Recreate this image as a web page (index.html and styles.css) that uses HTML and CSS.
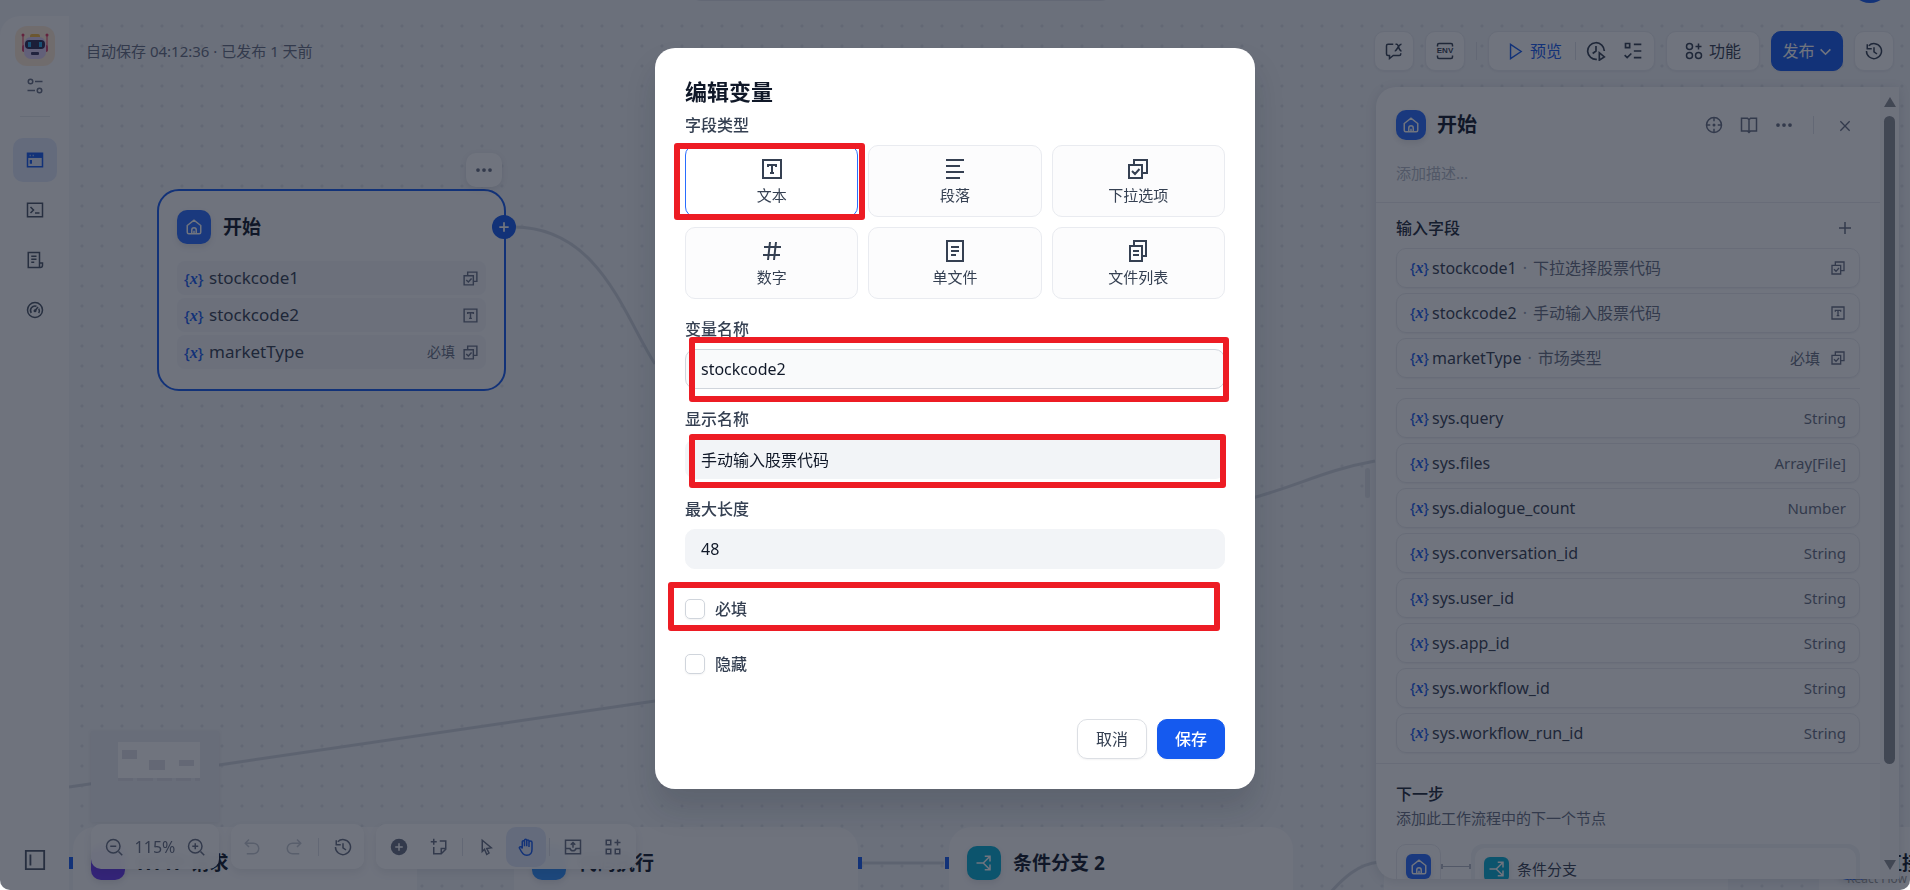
FILE: index.html
```html
<!DOCTYPE html>
<html lang="zh">
<head>
    <meta charset="UTF-8">
    <title>编辑变量</title>
    <link rel="stylesheet" href="styles.css">
</head>
<body>
<!-- 图标 -->
<svg class="sprite">
    <symbol id="i-select" viewBox="0 0 24 24"><path d="M8 7V3h13v13h-4M3 8h13v13H3zM6 14l3 3 4.500-5"/></symbol>
    <symbol id="i-text" viewBox="0 0 24 24"><path d="M3 3h18v18H3zM8 10V8h8v2M12 8v8M10 16h4"/></symbol>
    <symbol id="i-para" viewBox="0 0 24 24"><path d="M3 3h18M3 9h14M3 15h18M3 21h14"/></symbol>
    <symbol id="i-hash" viewBox="0 0 24 24"><path d="M10 3L8 21M16 3l-2 18M4 8h17M3 16h17"/></symbol>
    <symbol id="i-file" viewBox="0 0 24 24"><path d="M4 2h16v20H4zM8 8h8M8 12h8M8 16h5"/></symbol>
    <symbol id="i-files" viewBox="0 0 24 24"><path d="M8 6V2h12v15h-4M4 7h12v15H4zM7 12h6M7 16h6"/></symbol>
    <symbol id="i-home" viewBox="0 0 24 24"><path d="M3 10l9-7 9 7v9a2 2 0 0 1-2 2H5a2 2 0 0 1-2-2zM9 21v-5a3 3 0 0 1 6 0v5M12 17v4"/></symbol>
    <symbol id="i-branch" viewBox="0 0 24 24"><path d="M2 12h9l8-8M11 12l8 8M13 3h7v7M13 21h7v-7"/></symbol>
    <symbol id="i-plus" viewBox="0 0 24 24"><path d="M12 4v16M4 12h16"/></symbol>
    <symbol id="i-close" viewBox="0 0 24 24"><path d="M5 5l14 14M19 5L5 19"/></symbol>
    <symbol id="i-more" viewBox="0 0 24 24"><g class="solid"><circle cx="4" cy="12" r="2.500"/><circle cx="12" cy="12" r="2.500"/><circle cx="20" cy="12" r="2.500"/></g></symbol>
    <symbol id="i-sliders" viewBox="0 0 24 24"><path d="M12 6h10M2 18h10"/><circle cx="6" cy="6" r="3"/><circle cx="18" cy="18" r="3"/></symbol>
    <symbol id="i-window" viewBox="0 0 24 24"><path d="M2 3h20v18H2zM2 8h20"/><path class="solid" d="M2 3h20v6H2zM5 12h3v5H5z"/><path class="knock" d="M5 6h1M9 6h1"/></symbol>
    <symbol id="i-terminal" viewBox="0 0 24 24"><path d="M2 3h20v18H2zM6 8l4 4-4 4M12 16h6"/></symbol>
    <symbol id="i-logs" viewBox="0 0 24 24"><path d="M18 15V2H3v20h16a3 3 0 0 0 3-3v-3h-4v6M7 7h7M7 11h7M7 15h4"/></symbol>
    <symbol id="i-gauge" viewBox="0 0 24 24"><circle cx="12" cy="12" r="10"/><path d="M7 16a6 6 0 0 1 7-9M17 10a6 6 0 0 1 0 6M12 13l4-5"/><circle class="solid" cx="12" cy="13" r="2"/></symbol>
    <symbol id="i-layout" viewBox="0 0 24 24"><path d="M2 2h20v20H2zM7 6v12"/></symbol>
    <symbol id="i-chatvar" viewBox="0 0 24 24"><path d="M11 3H4a2 2 0 0 0-2 2v11a2 2 0 0 0 2 2h2v4l5-4h8a2 2 0 0 0 2-2v-1M13 12c3 0 5-9 9-9M14 3h2c2 0 2 9 6 9"/></symbol>
    <symbol id="i-env" viewBox="0 0 24 24"><path d="M2 6V4a2 2 0 0 1 2-2h16a2 2 0 0 1 2 2v2M2 18v2a2 2 0 0 0 2 2h16a2 2 0 0 0 2-2v-2"/></symbol>
    <symbol id="i-play" viewBox="0 0 24 24"><path d="M5 2l15 10L5 22z"/></symbol>
    <symbol id="i-runs" viewBox="0 0 24 24"><path d="M13 22A10 10 0 1 1 22 12M12 6v6l-4 3M16 14v9l6-4z"/></symbol>
    <symbol id="i-check" viewBox="0 0 24 24"><path d="M3 3h5v5H3zM13 4h9M13 12h9M13 20h9M2 17l3 3 5-5"/></symbol>
    <symbol id="i-apps" viewBox="0 0 24 24"><circle cx="6" cy="6" r="4"/><circle cx="6" cy="18" r="4"/><circle cx="18" cy="18" r="4"/><path d="M18 2v8M14 6h8"/></symbol>
    <symbol id="i-blocks" viewBox="0 0 24 24"><path d="M3 3h6v6H3zM3 15h6v6H3zM15 15h6v6h-6zM18 2v8M14 6h8"/></symbol>
    <symbol id="i-down" viewBox="0 0 24 24"><path d="M3 8l9 9 9-9"/></symbol>
    <symbol id="i-history" viewBox="0 0 24 24"><path d="M5 5a10 10 0 1 1-3 7M3 3v6h6M12 7v6l4 3"/></symbol>
    <symbol id="i-target" viewBox="0 0 24 24"><circle cx="12" cy="12" r="10"/><path d="M12 2v5M12 17v5M2 12h5M17 12h5"/><circle class="solid" cx="12" cy="12" r="2"/></symbol>
    <symbol id="i-book" viewBox="0 0 24 24"><path d="M2 3h8l2 2 2-2h8v17h-8l-2 2-2-2H2zM12 5v17"/></symbol>
    <symbol id="i-zoomout" viewBox="0 0 24 24"><circle cx="11" cy="11" r="9"/><path d="M18 18l5 5M7 11h8"/></symbol>
    <symbol id="i-zoomin" viewBox="0 0 24 24"><circle cx="11" cy="11" r="9"/><path d="M18 18l5 5M7 11h8M11 7v8"/></symbol>
    <symbol id="i-undo" viewBox="0 0 24 24"><path d="M8 2L3 7l5 5M3 7h11a7 7 0 0 1 0 14H5"/></symbol>
    <symbol id="i-redo" viewBox="0 0 24 24"><path d="M16 2l5 5-5 5M21 7H10a7 7 0 0 0 0 14h9"/></symbol>
    <symbol id="i-add" viewBox="0 0 24 24"><circle class="solid" cx="12" cy="12" r="11"/><path class="knock" d="M12 7v10M7 12h10"/></symbol>
    <symbol id="i-note" viewBox="0 0 24 24"><path d="M13 4h8v11l-6 6H5v-9M21 14h-6v7M5 1v8M1 5h8"/></symbol>
    <symbol id="i-cursor" viewBox="0 0 24 24"><path d="M7 3l12 10-6 1 3 6-3 2-3-7-3 3z"/></symbol>
    <symbol id="i-hand" viewBox="0 0 24 24"><path d="M7 13V5a1 1 0 0 1 3 0v6V3a1 1 0 0 1 3 0v8V4a1 1 0 0 1 3 0v8V6a1 1 0 0 1 4 0v9c0 5-3 8-7 8s-6-2-10-10c1-2 3-2 4 1z"/></symbol>
    <symbol id="i-export" viewBox="0 0 24 24"><path d="M2 3h20v18H2zM2 14h6c1 4 7 4 8 0h6M12 13V7M9 9l3-3 3 3"/></symbol>
</svg>

<div class="app">
    <header class="header"><span class="notch"></span><span class="avatar"></span></header>
    <div class="main">
        <nav class="sidebar">
            <a class="logo" href="#" aria-label="应用">
                <svg width="28" height="28" viewBox="0 0 28 28">
                    <path d="M2 3v16M26 3v16" stroke="#e0355f" stroke-width="1"/>
                    <circle cx="2" cy="3" r="1.500" fill="#e0355f"/><circle cx="26" cy="3" r="1.500" fill="#e0355f"/>
                    <rect x="1" y="13" width="26" height="7" rx="2" fill="#d0406c"/>
                    <rect x="9" y="2" width="10" height="5" rx="2" fill="#f5b73d"/>
                    <rect x="3" y="5" width="22" height="22" rx="7" fill="#dccdf2"/>
                    <rect x="4" y="8" width="20" height="9" rx="4" fill="#2b2850"/>
                    <rect x="7" y="10" width="3" height="5" fill="#27a6e6"/><rect x="18" y="10" width="3" height="5" fill="#27a6e6"/>
                    <rect x="10" y="20" width="8" height="3" rx="1" fill="#3b3560"/>
                </svg>
            </a>
            <svg class="icon sub"><use href="#i-sliders"/></svg>
            <hr>
            <a class="nav on" href="#" aria-label="编排"><svg class="icon"><use href="#i-window"/></svg></a>
            <a class="nav" href="#" aria-label="访问 API"><svg class="icon"><use href="#i-terminal"/></svg></a>
            <a class="nav" href="#" aria-label="日志"><svg class="icon"><use href="#i-logs"/></svg></a>
            <a class="nav" href="#" aria-label="监测"><svg class="icon"><use href="#i-gauge"/></svg></a>
            <button class="nav fold" aria-label="展开"><svg class="icon"><use href="#i-layout"/></svg></button>
        </nav>

        <main class="canvas">
            <!-- 连线 -->
            <svg class="edges" width="1841" height="874">
                <path d="M445 211C530 211 555 300 586 348"/>
                <path d="M0 771L586 685"/>
                <path d="M1160 488C1220 475 1250 455 1306 445"/>
                <path d="M793 847h82"/>
                <path d="M1255 884C1275 860 1290 848 1310 846"/>
            </svg>

            <section class="node start">
                <button class="more" aria-label="更多"><svg class="icon"><use href="#i-more"/></svg></button>
                <h3><span class="badge"><svg class="icon"><use href="#i-home"/></svg></span>开始</h3>
                <ul>
                    <li><span class="var">{<i>x</i>}</span>stockcode1<svg class="icon end"><use href="#i-select"/></svg></li>
                    <li><span class="var">{<i>x</i>}</span>stockcode2<svg class="icon end"><use href="#i-text"/></svg></li>
                    <li><span class="var">{<i>x</i>}</span>marketType<small class="end">必填</small><svg class="icon"><use href="#i-select"/></svg></li>
                </ul>
                <button class="add" aria-label="添加节点"><svg class="icon"><use href="#i-plus"/></svg></button>
            </section>
            <section class="node http">
                <h3><span class="badge purple"></span>HTTP 请求</h3>
            </section>
            <section class="node code">
                <h3><span class="badge sky"></span>代码执行</h3>
            </section>
            <section class="node cond">
                <h3><span class="badge cyan"><svg class="icon"><use href="#i-branch"/></svg></span>条件分支 2</h3>
            </section>
            <section class="node extra"></section>
            <section class="node reply"><h3><span class="badge"></span>直接回复</h3></section>
            <a class="credit" href="#">React Flow</a>

            <div class="topbar">
                <span class="saved">自动保存 04:12:36 · 已发布 1 天前</span>
                <button class="btn square" aria-label="会话变量"><svg class="icon"><use href="#i-chatvar"/></svg></button>
                <button class="btn square env" aria-label="环境变量"><svg class="icon"><use href="#i-env"/></svg><b>ENV</b></button>
                <span class="line"></span>
                <div class="btn group">
                    <button class="preview"><svg class="icon"><use href="#i-play"/></svg>预览</button>
                    <span class="line"></span>
                    <button aria-label="运行历史"><svg class="icon"><use href="#i-runs"/></svg></button>
                    <button aria-label="检查清单"><svg class="icon"><use href="#i-check"/></svg></button>
                </div>
                <button class="btn feature"><svg class="icon"><use href="#i-apps"/></svg>功能</button>
                <button class="btn publish">发布<svg class="icon"><use href="#i-down"/></svg></button>
                <button class="btn square" aria-label="版本历史"><svg class="icon"><use href="#i-history"/></svg></button>
            </div>

            <svg class="minimap" width="128" height="91">
                <path fill="#fff" d="M27 11h82v36H27z"/>
                <path fill="#e0e2e8" d="M31 19h15v9H31zM58 29h16v10H58zM88 29h15v6H88zM27 47h15v3H27zM46 47h16v3H46zM66 47h15v3H66zM85 47h15v3H85zM104 47h5v3h-5z"/>
            </svg>
            <div class="tools">
                <div class="tool zoom">
                    <button aria-label="缩小"><svg class="icon"><use href="#i-zoomout"/></svg></button>
                    <span>115%</span>
                    <button aria-label="放大"><svg class="icon"><use href="#i-zoomin"/></svg></button>
                </div>
                <div class="tool undo">
                    <button class="off" aria-label="撤销"><svg class="icon"><use href="#i-undo"/></svg></button>
                    <button class="off" aria-label="重做"><svg class="icon"><use href="#i-redo"/></svg></button>
                    <span class="line"></span>
                    <button aria-label="历史"><svg class="icon"><use href="#i-history"/></svg></button>
                </div>
                <div class="tool">
                    <button aria-label="添加节点"><svg class="icon"><use href="#i-add"/></svg></button>
                    <button aria-label="添加注释"><svg class="icon"><use href="#i-note"/></svg></button>
                    <span class="line"></span>
                    <button aria-label="指针"><svg class="icon"><use href="#i-cursor"/></svg></button>
                    <button class="on" aria-label="手"><svg class="icon"><use href="#i-hand"/></svg></button>
                    <span class="line"></span>
                    <button aria-label="导出图片"><svg class="icon"><use href="#i-export"/></svg></button>
                    <button aria-label="整理节点"><svg class="icon"><use href="#i-blocks"/></svg></button>
                </div>
            </div>

            <span class="resize"></span>
            <aside class="panel">
                <div class="body">
                    <div class="head">
                        <span class="badge"><svg class="icon"><use href="#i-home"/></svg></span>
                        <h2>开始</h2>
                        <button aria-label="运行此步骤"><svg class="icon"><use href="#i-target"/></svg></button>
                        <button aria-label="帮助文档"><svg class="icon"><use href="#i-book"/></svg></button>
                        <button aria-label="更多"><svg class="icon"><use href="#i-more"/></svg></button>
                        <span class="line"></span>
                        <button class="close" aria-label="关闭"><svg class="icon"><use href="#i-close"/></svg></button>
                    </div>
                    <p class="desc">添加描述...</p>
                    <div class="fields">
                        <div class="caption"><h4>输入字段</h4><button aria-label="添加字段"><svg class="icon"><use href="#i-plus"/></svg></button></div>
                        <ul>
                            <li><span class="var">{<i>x</i>}</span>stockcode1<em><b>·</b>下拉选择股票代码</em><svg class="icon end"><use href="#i-select"/></svg></li>
                            <li><span class="var">{<i>x</i>}</span>stockcode2<em><b>·</b>手动输入股票代码</em><svg class="icon end"><use href="#i-text"/></svg></li>
                            <li><span class="var">{<i>x</i>}</span>marketType<em><b>·</b>市场类型</em><small class="end">必填</small><svg class="icon"><use href="#i-select"/></svg></li>
                        </ul>
                        <ul class="system">
                            <li><span class="var">{<i>x</i>}</span>sys.query<small class="end">String</small></li>
                            <li><span class="var">{<i>x</i>}</span>sys.files<small class="end">Array[File]</small></li>
                            <li><span class="var">{<i>x</i>}</span>sys.dialogue_count<small class="end">Number</small></li>
                            <li><span class="var">{<i>x</i>}</span>sys.conversation_id<small class="end">String</small></li>
                            <li><span class="var">{<i>x</i>}</span>sys.user_id<small class="end">String</small></li>
                            <li><span class="var">{<i>x</i>}</span>sys.app_id<small class="end">String</small></li>
                            <li><span class="var">{<i>x</i>}</span>sys.workflow_id<small class="end">String</small></li>
                            <li><span class="var">{<i>x</i>}</span>sys.workflow_run_id<small class="end">String</small></li>
                        </ul>
                    </div>
                    <div class="next">
                        <h4>下一步</h4>
                        <p>添加此工作流程中的下一个节点</p>
                        <div class="flow">
                            <span class="from"><span class="badge"><svg class="icon"><use href="#i-home"/></svg></span></span>
                            <span class="link"></span>
                            <span class="to"><span class="target"><span class="badge cyan"><svg class="icon"><use href="#i-branch"/></svg></span>条件分支</span></span>
                        </div>
                    </div>
                </div>
                <div class="scroll"><span class="up"></span><span class="thumb"></span><span class="down"></span></div>
            </aside>
        </main>
    </div>
</div>

<div class="mask">
    <form class="modal">
        <h1>编辑变量</h1>
        <h5>字段类型</h5>
        <div class="types">
            <button type="button" class="on"><svg class="icon"><use href="#i-text"/></svg>文本</button>
            <button type="button"><svg class="icon"><use href="#i-para"/></svg>段落</button>
            <button type="button"><svg class="icon"><use href="#i-select"/></svg>下拉选项</button>
            <button type="button"><svg class="icon"><use href="#i-hash"/></svg>数字</button>
            <button type="button"><svg class="icon"><use href="#i-file"/></svg>单文件</button>
            <button type="button"><svg class="icon"><use href="#i-files"/></svg>文件列表</button>
        </div>
        <label for="name">变量名称</label>
        <input class="focus" id="name" type="text" value="stockcode2">
        <label for="label">显示名称</label>
        <input id="label" type="text" value="手动输入股票代码">
        <label for="max">最大长度</label>
        <input id="max" type="text" value="48">
        <div class="check"><input id="required" type="checkbox"><label for="required">必填</label></div>
        <div class="check"><input id="hide" type="checkbox"><label for="hide">隐藏</label></div>
        <div class="foot">
            <button type="button">取消</button>
            <button type="button" class="save">保存</button>
        </div>
        <!-- 红框标注 -->
        <span class="mark mark-type"></span>
        <span class="mark mark-name"></span>
        <span class="mark mark-label"></span>
        <span class="mark mark-required"></span>
    </form>
</div>
</body>
</html>
```
FILE: styles.css
```css
* {
    box-sizing: border-box;
    margin: 0;
    padding: 0;
}

body {
    height: 100vh;
    overflow: hidden;
    background: #fff;
    color: #354052;
    font: 16px/24px "Noto Sans", "Noto Sans CJK SC", sans-serif;
}

button {
    border: 0;
    background: none;
    color: inherit;
    font: inherit;
}

ul {
    list-style: none;
}

em, i, small {
    font-style: normal;
}

.sprite {
    position: absolute;
    width: 0;
    height: 0;
}

.icon {
    width: 18px;
    height: 18px;
    flex: none;
    fill: none;
    stroke: currentColor;
    stroke-width: 2;
}

.solid {
    fill: currentColor;
    stroke: none;
}

.knock {
    stroke: #fff;
}

.app {
    height: 100vh;
    display: flex;
    flex-direction: column;
    background: #f2f4f7;
    border-radius: 0 0 10px 10px;
    overflow: hidden;
}

.header {
    height: 16px;
    flex: none;
    position: relative;
}

.notch {
    position: absolute;
    left: 50%;
    top: -20px;
    width: 420px;
    height: 21px;
    margin-left: -264px;
    border-radius: 10px;
    background: #dfe2e8;
}

.avatar {
    position: absolute;
    right: 20px;
    top: -37px;
    width: 40px;
    height: 40px;
    border-radius: 50%;
    background: #155aef;
}

.main {
    flex: 1;
    display: flex;
    min-height: 0;
}

/* 左侧导航 */
.sidebar {
    width: 69px;
    flex: none;
    display: flex;
    flex-direction: column;
    align-items: center;
    padding: 10px 0 8px;
    background: #fcfcfd;
    border-radius: 20px 0 0 0;
}

.logo {
    width: 40px;
    height: 40px;
    border-radius: 12px;
    background: #ffead5;
    display: flex;
    align-items: center;
    justify-content: center;
}

.sub {
    margin-top: 11px;
    color: #676f83;
}

.sidebar hr {
    width: 30px;
    margin: 21px 0;
    border: 0;
    border-top: 1px solid #e6e8ec;
}

.nav {
    width: 44px;
    height: 44px;
    margin-bottom: 6px;
    border-radius: 10px;
    display: flex;
    align-items: center;
    justify-content: center;
    color: #495464;
}

.nav.on {
    background: #e1e8fb;
    color: #155aef;
}

.fold {
    margin: auto 0 0;
}

.fold .icon {
    width: 22px;
    height: 22px;
}

/* 画布 */
.canvas {
    flex: 1;
    position: relative;
    overflow: hidden;
    background: #f2f4f7 radial-gradient(circle, #dfe2e9 0, #dfe2e9 1px, transparent 2px) 3px 0 / 20px 20px;
}

.edges {
    position: absolute;
    left: 0;
    top: 0;
    fill: none;
    stroke: #d0d5dd;
    stroke-width: 3;
}

.node {
    position: absolute;
    width: 344px;
    height: 200px;
    padding: 19px 18px;
    border-radius: 22px;
    background: #fcfcfd;
}

.node h3 {
    display: flex;
    align-items: center;
    gap: 12px;
    height: 34px;
    font-size: 19px;
    color: #101828;
    white-space: nowrap;
}

.badge {
    width: 34px;
    height: 34px;
    flex: none;
    display: flex;
    align-items: center;
    justify-content: center;
    border-radius: 10px;
    background: #296dff;
    color: #fff;
    box-shadow: 0 3px 6px rgba(16, 24, 40, .1);
}

.purple {
    background: #6938ef;
}

.sky {
    background: #2e90fa;
}

.cyan {
    background: #06aed4;
}

.start {
    left: 88px;
    top: 173px;
    width: 349px;
    height: 202px;
    border: 2px solid #155aef;
}

.start ul {
    display: grid;
    gap: 3px;
    margin-top: 17px;
}

.start li {
    display: flex;
    align-items: center;
    height: 34px;
    padding: 0 7px;
    border-radius: 8px;
    background: #f4f5f8;
    font-size: 17px;
}

.start li .icon {
    width: 17px;
    height: 17px;
    color: #676f83;
}

.start small {
    margin-right: 7px;
    font-size: 14px;
    color: #676f83;
}

.end {
    margin-left: auto;
}

.var {
    width: 25px;
    color: #155aef;
    font-size: 15px;
    font-weight: 500;
}

.var i {
    font: italic bold 16px "Liberation Serif", serif;
}

.more {
    position: absolute;
    right: 2px;
    top: -38px;
    width: 36px;
    height: 34px;
    border-radius: 10px;
    background: #fff;
    box-shadow: 0 2px 6px rgba(16, 24, 40, .1);
    color: #676f83;
    padding-top: 5px;
}

.add {
    position: absolute;
    right: -12px;
    top: 24px;
    width: 24px;
    height: 24px;
    border-radius: 50%;
    background: #155aef;
    color: #fff;
    display: flex;
    align-items: center;
    justify-content: center;
}

.add .icon {
    width: 14px;
    height: 14px;
    stroke-width: 3;
}

.http {
    left: 4px;
    top: 811px;
}

.code {
    left: 445px;
    top: 811px;
}

.cond {
    left: 880px;
    top: 811px;
}

.http::before, .code::after, .cond::before {
    content: "";
    position: absolute;
    top: 30px;
    left: -4px;
    width: 4px;
    height: 12px;
    background: #155aef;
}

.code::after {
    left: 344px;
}

.extra {
    left: 1315px;
    top: 811px;
}

.reply {
    left: 1750px;
    top: 811px;
}

.credit {
    position: absolute;
    right: 3px;
    bottom: 0;
    font-size: 12px;
    line-height: 22px;
    color: #999;
    text-decoration: none;
}

/* 顶部按钮 */
.topbar {
    position: absolute;
    left: 0;
    right: 0;
    top: 15px;
    display: flex;
    align-items: center;
    gap: 11px;
    padding: 0 16px 0 17px;
}

.saved {
    margin-right: auto;
    font-size: 15px;
    color: #676f83;
}

.btn {
    height: 40px;
    display: flex;
    align-items: center;
    justify-content: center;
    border: 1px solid #e9ebf0;
    border-radius: 10px;
    background: #fff;
    box-shadow: 0 1px 2px rgba(16, 24, 40, .05);
}

.square {
    width: 40px;
}

/* 图标上叠文字 */
.env {
    display: grid;
    place-content: center;
    place-items: center;
}

.env .icon, .env b {
    grid-area: 1 / 1;
}

.env b {
    font: bold 8px/18px "Liberation Sans", sans-serif;
}

.line {
    width: 1px;
    height: 18px;
    background: #dfe2e8;
}

.btn.group {
    width: 167px;
    justify-content: flex-start;
    padding-left: 18px;
}

.group .icon {
    width: 20px;
    height: 20px;
}

.group button {
    display: flex;
    align-items: center;
    gap: 6px;
}

.group .preview {
    color: #155aef;
}

.group .preview .icon {
    width: 17px;
    height: 17px;
}

.group .line {
    margin: 0 10px 0 13px;
}

.group button:last-child {
    margin-left: 17px;
}

.feature {
    width: 94px;
    gap: 6px;
}

.publish {
    width: 72px;
    gap: 4px;
    background: #155aef;
    border-color: #155aef;
    color: #fff;
}

.publish .icon {
    width: 13px;
    height: 13px;
    stroke-width: 3;
}

/* 左下工具 */
.minimap {
    position: absolute;
    left: 22px;
    bottom: 68px;
    background: #eceef2;
    box-shadow: 0 1px 4px rgba(16, 24, 40, .08);
}

.tools {
    position: absolute;
    left: 22px;
    bottom: 21px;
    display: flex;
    gap: 12px;
}

.tool {
    height: 45px;
    display: flex;
    align-items: center;
    padding: 0 3px;
    border-radius: 10px;
    background: rgba(255, 255, 255, .95);
    backdrop-filter: blur(5px);
    box-shadow: 0 4px 8px rgba(16, 24, 40, .08);
    color: #676f83;
}

.tool button {
    width: 40px;
    height: 40px;
    display: flex;
    align-items: center;
    justify-content: center;
    border-radius: 10px;
}

.tool .line {
    margin: 0 3px;
}

.tool .off {
    color: #c5cad3;
}

.tool .on {
    background: #e1e8fb;
    color: #155aef;
}

.zoom {
    width: 128px;
    justify-content: space-between;
}

.undo {
    padding: 0;
}

.tool.undo button {
    width: 42px;
}

/* 右侧面板 */
.resize {
    position: absolute;
    right: 540px;
    top: 452px;
    width: 5px;
    height: 30px;
    border-radius: 3px;
    background: #dfe2e8;
}

.panel {
    position: absolute;
    right: 11px;
    top: 71px;
    bottom: 11px;
    width: 523px;
    display: flex;
    overflow: hidden;
    border-radius: 20px 0 0 20px;
    background: #fff;
    box-shadow: 0 2px 12px rgba(16, 24, 40, .12);
}

.panel .body {
    flex: 1;
    overflow: hidden;
}

.panel .badge {
    width: 30px;
    height: 30px;
}

.head {
    display: flex;
    align-items: center;
    padding: 23px 26px 0 20px;
    color: #676f83;
}

.head h2 {
    flex: 1;
    margin-left: 11px;
    font-size: 20px;
    line-height: 30px;
    color: #101828;
}

.head button {
    width: 35px;
    height: 30px;
    padding-top: 5px;
}

.head .line {
    margin: 0 13px 0 12px;
}

.head .close {
    width: 18px;
    margin-left: 9px;
}

.head .close .icon {
    width: 16px;
    height: 16px;
}

.desc {
    padding: 21px 20px 17px;
    font-size: 15px;
    color: #b3bac6;
    border-bottom: 1px solid #eaecf0;
}

.fields {
    padding: 13px 20px 10px;
    border-bottom: 1px solid #eaecf0;
}

.caption {
    display: flex;
    justify-content: space-between;
    align-items: center;
    height: 24px;
    padding-right: 6px;
    margin-bottom: 8px;
    color: #676f83;
}

.caption .icon {
    display: block;
}

h4 {
    font-size: 16px;
    font-weight: 500;
    color: #1d2939;
}

.fields ul {
    display: grid;
    gap: 5px;
}

.fields li {
    display: flex;
    align-items: center;
    height: 40px;
    padding: 0 13px;
    border: 1px solid #eaecf0;
    border-radius: 10px;
    box-shadow: 0 1px 2px rgba(16, 24, 40, .05);
}

.fields .var {
    width: 22px;
    font-size: 14px;
}

.fields em {
    color: #676f83;
}

.fields em b {
    margin: 0 6px;
    font-weight: 400;
    color: #98a2b2;
}

.fields small {
    font-size: 15px;
    color: #676f83;
}

.fields li .icon {
    width: 16px;
    height: 16px;
    color: #676f83;
}

.fields small + .icon {
    margin-left: 10px;
}

.fields .system {
    margin-top: 10px;
    padding-top: 9px;
    border-top: 1px solid #eaecf0;
}

.next {
    padding: 18px 20px 0;
}

.next p {
    font-size: 15px;
    color: #676f83;
}

.flow {
    display: flex;
    margin-top: 14px;
}

.from {
    width: 45px;
    height: 45px;
    padding: 9px;
    border: 1px solid #eaecf0;
    border-radius: 10px;
}

.panel .flow .badge {
    width: 25px;
    height: 25px;
    border-radius: 6px;
}

.link {
    width: 30px;
    height: 5px;
    margin-top: 20px;
    border: solid #b3bac6;
    border-width: 0 2px;
    background: linear-gradient(#b3bac6, #b3bac6) 0 2px / 100% 1px no-repeat;
}

.to {
    flex: 1;
    height: 60px;
    padding: 4px 4px 0;
    border-radius: 12px;
    background: #f2f4f7;
}

.target {
    display: flex;
    align-items: center;
    gap: 8px;
    height: 42px;
    padding: 0 9px;
    border-radius: 10px;
    background: #fff;
    font-size: 15px;
}

.scroll {
    width: 19px;
    display: flex;
    flex-direction: column;
    align-items: center;
    padding: 10px 0 9px;
    background: #fafafb;
}

.up, .down {
    border: 6px solid transparent;
    border-top: 0;
    border-bottom: 10px solid #8b8e95;
}

.thumb {
    width: 11px;
    height: 648px;
    margin: 9px 0 auto;
    border-radius: 6px;
    background: #8b8e95;
}

.down {
    border-top: 10px solid #8b8e95;
    border-bottom: 0;
}

/* 弹窗 */
.mask {
    position: fixed;
    inset: 0;
    display: flex;
    justify-content: center;
    align-items: flex-start;
    padding-top: 48px;
    border-radius: 0 0 10px 10px;
    background: rgba(16, 24, 40, .6);
}

.modal {
    position: relative;
    width: 600px;
    padding: 28px 30px 30px;
    border-radius: 20px;
    background: #fff;
    box-shadow: 0 20px 30px rgba(16, 24, 40, .15);
}

.modal h1 {
    font-size: 22px;
    line-height: 30px;
    color: #101828;
}

.modal h5 {
    font-size: 16px;
    font-weight: 500;
    line-height: 30px;
    margin: 4px 0 5px;
}

.types {
    display: grid;
    grid-template-columns: repeat(3, 1fr);
    gap: 10px;
    margin-bottom: 15px;
}

.types button {
    display: flex;
    flex-direction: column;
    align-items: center;
    gap: 2px;
    height: 72px;
    padding-top: 11px;
    border: 1px solid #e9ebf0;
    border-radius: 10px;
    background: #fcfcfd;
    font-size: 15px;
}

.types button.on {
    border-color: #296dff;
    background: #fff;
}

.types .icon {
    width: 24px;
    height: 24px;
}

.modal > label {
    display: block;
    height: 30px;
    margin-bottom: 5px;
    font-weight: 500;
    line-height: 30px;
}

.modal > input {
    display: block;
    width: 100%;
    height: 40px;
    margin-bottom: 15px;
    padding: 0 15px;
    border: 1px solid #f2f4f7;
    border-radius: 10px;
    background: #f2f4f7;
    color: #101828;
    font: inherit;
}

.modal > input.focus {
    border-color: #d0d5dc;
    background: #f9fafb;
}

.check {
    display: flex;
    align-items: center;
    gap: 10px;
    height: 20px;
    margin-top: 30px;
    font-weight: 500;
}

.check + .check {
    margin-top: 35px;
}

.check input {
    appearance: none;
    width: 20px;
    height: 20px;
    border: 1px solid #d0d5dc;
    border-radius: 5px;
    box-shadow: 0 1px 2px rgba(16, 24, 40, .05);
}

.foot {
    display: flex;
    justify-content: flex-end;
    gap: 10px;
    margin-top: 45px;
}

.foot button {
    height: 40px;
    padding: 0 18px;
    border: 1px solid #dcdfe4;
    border-radius: 10px;
    box-shadow: 0 1px 2px rgba(16, 24, 40, .05);
}

.foot .save {
    padding: 0 17px;
    border-color: #155aef;
    background: #155aef;
    color: #fff;
    font-weight: 500;
}

.mark {
    position: absolute;
    border: 6px solid #ed1c24;
    border-radius: 3px;
    pointer-events: none;
}

.mark-type {
    left: 19px;
    top: 95px;
    width: 191px;
    height: 77px;
}

.mark-name {
    left: 34px;
    top: 289px;
    width: 540px;
    height: 65px;
}

.mark-label {
    left: 34px;
    top: 386px;
    width: 537px;
    height: 54px;
}

.mark-required {
    left: 13px;
    top: 534px;
    width: 552px;
    height: 49px;
}
```
